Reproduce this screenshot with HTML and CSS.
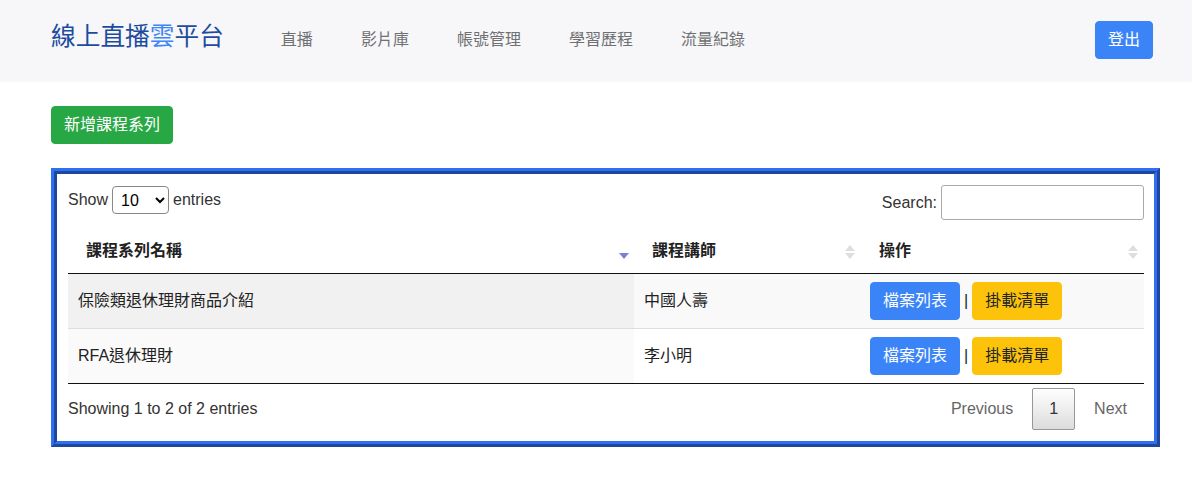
FILE: index.html
```html
<!DOCTYPE html>
<html lang="zh-Hant">
<head>
<meta charset="utf-8">
<title>線上直播雲平台</title>
<link rel="stylesheet" href="styles.css">
</head>
<body>
<header class="navbar">
  <a class="brand" href="#">線上直播<span class="brand-accent">雲</span>平台</a>
  <nav class="nav">
    <a class="nav-link" href="#">直播</a>
    <a class="nav-link" href="#">影片庫</a>
    <a class="nav-link" href="#">帳號管理</a>
    <a class="nav-link" href="#">學習歷程</a>
    <a class="nav-link" href="#">流量紀錄</a>
  </nav>
  <button class="btn btn-primary logout">登出</button>
</header>
<main class="main">
  <button class="btn btn-success add-btn">新增課程系列</button>
  <section class="dt-box">
    <div class="dt-top">
      <label class="dt-length">Show <select class="dt-select"><option>10</option><option>25</option><option>50</option><option>100</option></select> entries</label>
      <label class="dt-search">Search:<input class="dt-input" type="search"></label>
    </div>
    <table class="dt-table">
      <thead>
        <tr>
          <th class="col1 sort-desc">課程系列名稱<span class="sort"><span class="up"></span><span class="down"></span></span></th>
          <th class="col2">課程講師<span class="sort"><span class="up"></span><span class="down"></span></span></th>
          <th class="col3">操作<span class="sort"><span class="up"></span><span class="down"></span></span></th>
        </tr>
      </thead>
      <tbody>
        <tr class="odd">
          <td class="sorted">保險類退休理財商品介紹</td>
          <td>中國人壽</td>
          <td class="act-cell"><div class="actions"><button class="btn btn-primary">檔案列表</button><span class="sep">|</span><button class="btn btn-warning">掛載清單</button></div></td>
        </tr>
        <tr class="even">
          <td class="sorted">RFA退休理財</td>
          <td>李小明</td>
          <td class="act-cell"><div class="actions"><button class="btn btn-primary">檔案列表</button><span class="sep">|</span><button class="btn btn-warning">掛載清單</button></div></td>
        </tr>
      </tbody>
    </table>
    <div class="dt-bottom">
      <div class="dt-info">Showing 1 to 2 of 2 entries</div>
      <div class="dt-paginate">
        <a class="pg-btn disabled">Previous</a><a class="pg-btn current">1</a><a class="pg-btn disabled">Next</a>
      </div>
    </div>
  </section>
</main>
</body>
</html>
```

FILE: styles.css
```css
* { box-sizing: border-box; }
html, body { margin: 0; padding: 0; }
body {
  font-family: "Liberation Sans", "Noto Sans CJK TC", sans-serif;
  font-size: 16px;
  line-height: 1.5;
  color: #212529;
  background: #fff;
}
.navbar {
  display: flex;
  align-items: center;
  height: 82px;
  padding: 0 39px 2px 51px;
  background: #f7f7f9;
}
.brand {
  font-size: 24.7px;
  line-height: 1.2;
  color: #1d4c9e;
  text-decoration: none;
  margin-right: 33px;
  margin-bottom: 6px;
}
.brand-accent { color: #3b86f8; }
.nav { display: flex; flex: 1; }
.nav-link {
  padding: 0 24px;
  color: #6f7072;
  text-decoration: none;
  line-height: 24px;
}
.btn {
  display: inline-block;
  font-family: inherit;
  font-size: 16px;
  line-height: 24px;
  padding: 6px 12px;
  border: 1px solid transparent;
  border-radius: 4px;
  cursor: pointer;
  vertical-align: middle;
}
.btn-primary { background: #3a84f8; border-color: #3a84f8; color: #fff; }
.btn-success { background: #28a745; border-color: #28a745; color: #fff; }
.btn-warning { background: #fcc30a; border-color: #fcc30a; color: #212529; }
.main { padding: 24px 32px 0 51px; }
.add-btn { display: block; margin-bottom: 24px; }
.dt-box {
  border: 6px ridge #2f6ff0;
  padding: 11px 10px 11px 11px;
  color: #333;
}
.dt-top {
  display: flex;
  justify-content: space-between;
  align-items: flex-start;
}
.dt-length { display: flex; align-items: center; gap: 4px; line-height: 28px; padding-top: 1px; }
.dt-select {
  width: 57px;
  height: 28px;
  font-family: inherit;
  font-size: 16px;
  padding: 0 4px;
  border: 1px solid #888;
  border-radius: 4px;
  background: #fff;
  color: #000;
}
.dt-search { display: flex; align-items: center; gap: 4px; }
.dt-input {
  width: 203px;
  height: 35px;
  border: 1px solid #aaa;
  border-radius: 3px;
  padding: 5px;
  font-size: 16px;
  background: #fff;
}
.dt-table {
  width: 100%;
  margin-top: 9px;
  border-collapse: separate;
  border-spacing: 0;
  border-bottom: 1px solid #111;
  table-layout: fixed;
}
.dt-table th {
  position: relative;
  text-align: left;
  font-weight: bold;
  padding: 10px 18px;
  line-height: 24px;
  color: #222;
  border-bottom: 1px solid #111;
}
.col1 { width: 566px; }
.col2 { width: 227px; }
.col3 { width: 283px; }
.sort {
  position: absolute;
  right: 6px;
  top: 16px;
  display: flex;
  flex-direction: column;
  gap: 2px;
}
.sort .up {
  width: 0; height: 0;
  border-left: 5px solid transparent;
  border-right: 5px solid transparent;
  border-bottom: 6px solid #dedede;
}
.sort .down {
  width: 0; height: 0;
  border-left: 5px solid transparent;
  border-right: 5px solid transparent;
  border-top: 6px solid #dedede;
}
.sort-desc .sort .up { visibility: hidden; }
.sort-desc .sort .down { border-top-color: #7d7fd6; }
.sort-desc .sort { right: 5px; }
.dt-table td {
  padding: 8px 10px;
  line-height: 38px;
  height: 54px;
  color: #222;
}
.dt-table td.act-cell { padding-left: 9px; }
.dt-table tbody tr + tr td { border-top: 1px solid #ddd; }
.odd td { background: #f9f9f9; }
.odd td.sorted { background: #f1f1f1; }
.even td { background: #fff; }
.even td.sorted { background: #fafafa; }
.actions { display: flex; align-items: center; gap: 4px; white-space: nowrap; line-height: 24px; }
.dt-bottom {
  display: flex;
  justify-content: space-between;
  align-items: flex-start;
}
.dt-info { padding-top: 13px; line-height: 24px; }
.dt-paginate { display: flex; padding-top: 4px; }
.pg-btn {
  display: inline-block;
  padding: 8px 16px;
  line-height: 24px;
  border: 1px solid transparent;
  border-radius: 2px;
  margin-left: 2px;
  color: #666;
}
.pg-btn.current {
  color: #333;
  border-color: #979797;
  background: linear-gradient(to bottom, #fff 0%, #dcdcdc 100%);
}
```
